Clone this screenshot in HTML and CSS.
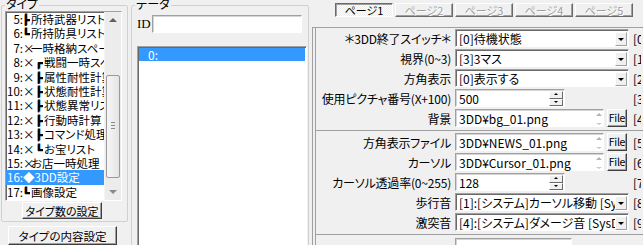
FILE: index.html
```html
<!DOCTYPE html>
<html lang="ja">
<head>
  <meta charset="UTF-8">
  <title>3DD設定</title>
  <link rel="stylesheet" href="styles.css">
</head>
<body>

<div class="window">

  <div class="side">
    <div class="group type-group">
      <div class="legend">タイプ</div>
      <div class="listbox type-list">
        <ul class="items">
          <li><span class="num">5:</span><span class="tree">┣</span>所持武器リスト</li>
          <li><span class="num">6:</span><span class="tree">┗</span>所持防具リスト</li>
          <li><span class="num">7:</span><span class="mark">×</span>一時格納スペース</li>
          <li><span class="num">8:</span><span class="mark">×</span><span class="tree sub">┏</span>戦闘一時スペース</li>
          <li><span class="num">9:</span><span class="mark">×</span><span class="tree sub">┣</span>属性耐性計算</li>
          <li><span class="num">10:</span><span class="mark">×</span><span class="tree sub">┣</span>状態耐性計算</li>
          <li><span class="num">11:</span><span class="mark">×</span><span class="tree sub">┣</span>状態異常リスト</li>
          <li><span class="num">12:</span><span class="mark">×</span><span class="tree sub">┣</span>行動時計算</li>
          <li><span class="num">13:</span><span class="mark">×</span><span class="tree sub">┣</span>コマンド処理</li>
          <li><span class="num">14:</span><span class="mark">×</span><span class="tree sub">┗</span>お宝リスト</li>
          <li><span class="num">15:</span><span class="mark">×</span>お店一時処理</li>
          <li class="selected"><span class="num">16:</span>◆3DD設定</li>
          <li><span class="num">17:</span><span class="tree">┗</span>画像設定</li>
        </ul>
        <div class="vscroll">
          <div class="arrow up"></div>
          <div class="track"><div class="thumb"></div></div>
          <div class="arrow down"></div>
        </div>
      </div>
      <button class="btn type-count">タイプ数の設定</button>
    </div>
    <button class="btn type-edit">タイプの内容設定</button>
  </div>

  <div class="group data-group">
    <div class="legend">データ</div>
    <div class="id-row">
      <span class="id-label">ID</span>
      <div class="edit id-edit"></div>
    </div>
    <ul class="data-list">
      <li class="selected">0:</li>
    </ul>
  </div>

  <div class="editor">
    <div class="tabs">
      <div class="tab active">ページ1</div>
      <div class="tab">ページ2</div>
      <div class="tab">ページ3</div>
      <div class="tab">ページ4</div>
      <div class="tab">ページ5</div>
    </div>

    <div class="pane">
      <div class="section first">
        <div class="row">
          <label>＊3DD終了スイッチ＊</label>
          <div class="combo"><span class="value">[0]待機状態</span><span class="drop"></span></div>
          <span class="idx">[0]</span>
        </div>
        <div class="row">
          <label>視界(0~3)</label>
          <div class="combo"><span class="value">[3]3マス</span><span class="drop"></span></div>
          <span class="idx">[1]</span>
        </div>
        <div class="row">
          <label>方角表示</label>
          <div class="combo"><span class="value">[0]表示する</span><span class="drop"></span></div>
          <span class="idx">[2]</span>
        </div>
        <div class="row">
          <label>使用ピクチャ番号(X+100)</label>
          <div class="edit spin-edit"><span class="value">500</span><span class="spin"><i class="up"></i><i class="down"></i></span></div>
          <span class="idx">[3]</span>
        </div>
        <div class="row">
          <label>背景</label>
          <div class="file-field">
            <div class="edit file-edit"><span class="value">3DD¥bg_01.png</span><span class="mini"></span></div>
            <button class="btn file-btn">File</button>
          </div>
          <span class="idx">[4]</span>
        </div>
      </div>

      <div class="section second">
        <div class="row">
          <label>方角表示ファイル</label>
          <div class="file-field">
            <div class="edit file-edit"><span class="value">3DD¥NEWS_01.png</span><span class="mini"></span></div>
            <button class="btn file-btn">File</button>
          </div>
          <span class="idx">[5]</span>
        </div>
        <div class="row">
          <label>カーソル</label>
          <div class="file-field">
            <div class="edit file-edit"><span class="value">3DD¥Cursor_01.png</span><span class="mini"></span></div>
            <button class="btn file-btn">File</button>
          </div>
          <span class="idx">[6]</span>
        </div>
        <div class="row">
          <label>カーソル透過率(0~255)</label>
          <div class="edit spin-edit"><span class="value">128</span><span class="spin"><i class="up"></i><i class="down"></i></span></div>
          <span class="idx">[7]</span>
        </div>
        <div class="row">
          <label>歩行音</label>
          <div class="combo"><span class="value">[1]:[システム]カーソル移動 [SysDB3:1]</span><span class="drop"></span></div>
          <span class="idx">[8]</span>
        </div>
        <div class="row">
          <label>激突音</label>
          <div class="combo"><span class="value">[4]:[システム]ダメージ音 [SysDB3]</span><span class="drop"></span></div>
          <span class="idx">[9]</span>
        </div>
      </div>

      <div class="section third">
        <div class="row">
          <label></label>
          <div class="edit short-edit"></div>
        </div>
      </div>
    </div>
  </div>

</div>

</body>
</html>
```

FILE: styles.css
```css
* {
  box-sizing: border-box;
}

body {
  margin: 0;
  height: 245px;
  overflow: hidden;
  background: #f0f0f0;
  font-family: "Noto Sans CJK JP", "Noto Sans", sans-serif;
  font-size: 12px;
  font-feature-settings: "palt";
  color: #000;
}

.window {
  display: flex;
  height: 245px;
  overflow: hidden;
}

/* group boxes */

.group {
  position: relative;
  flex: none;
  border: 1px solid #d0d0d0;
  border-radius: 2px;
}

.legend {
  position: absolute;
  top: -9px;
  left: 3px;
  padding: 0 1px;
  line-height: 14px;
  background: #f0f0f0;
}

/* left column */

.side {
  flex: none;
  width: 131px;
  padding-left: 1px;
}

.type-group {
  margin-top: 5px;
  width: 127px;
  height: 217px;
  padding: 5px 0 0 3px;
}

.listbox {
  display: flex;
  width: 117px;
  height: 190px;
  background: #fff;
  border: 1px solid;
  border-color: #a0a0a0 #fff #fff #a0a0a0;
  box-shadow: inset 1px 1px #696969;
}

.items {
  flex: 1;
  min-width: 0;
  margin: 0;
  padding: 0;
  list-style: none;
  overflow: hidden;
  font-size: 11.5px;
}

.items li {
  height: 14.4px;
  line-height: 14.4px;
  white-space: nowrap;
}

.items .selected,
.data-list .selected {
  background: #3399ff;
  color: #fff;
}

.num {
  display: inline-block;
  width: 17px;
  text-align: right;
}

.mark {
  display: inline-block;
  width: 8px;
  text-align: center;
}

/* only the right half of the full-width box glyph is shown */
.tree {
  display: inline-block;
  vertical-align: top;
  width: 6px;
  height: 14.4px;
  margin: 0 1px 0 1px;
  overflow: hidden;
  font-size: 11px;
  font-weight: 700;
  font-feature-settings: normal;
  line-height: 14.4px;
  text-indent: -4px;
  text-shadow: 1px 0 currentColor, 0 1px currentColor;
}

.tree.sub {
  margin-left: 6px;
}

.vscroll {
  flex: none;
  width: 17px;
  display: flex;
  flex-direction: column;
  background: #ececec;
  border-left: 1px solid #f4f4f4;
}

.arrow {
  position: relative;
  height: 17px;
  flex: none;
}

.arrow::after {
  content: "";
  position: absolute;
  left: 4px;
  border-left: 4px solid transparent;
  border-right: 4px solid transparent;
}

.arrow.up::after {
  top: 6px;
  border-bottom: 4px solid #606060;
}

.arrow.down::after {
  top: 7px;
  border-top: 4px solid #8a8a8a;
}

.track {
  flex: 1;
  padding-top: 46px;
}

.thumb {
  position: relative;
  height: 103px;
  margin: 0 1px;
  border: 1px solid #9a9a9a;
  border-radius: 2px;
  background: linear-gradient(to right, #f6f6f6, #e4e4e4);
}

.thumb::after {
  content: "";
  position: absolute;
  left: 4px;
  right: 4px;
  top: 46px;
  height: 7px;
  background: repeating-linear-gradient(#8a8a8a 0 1px, transparent 1px 3px);
}

.btn {
  display: block;
  padding: 0;
  font-family: inherit;
  font-size: 12px;
  font-feature-settings: "palt";
  white-space: nowrap;
  color: #000;
  background: #f0f0f0;
  border: 1px solid;
  border-color: #fff #404040 #404040 #fff;
  box-shadow: inset -1px -1px #a0a0a0;
}

.type-count {
  width: 80px;
  height: 17px;
  margin: 1px 0 0 17px;
  font-size: 11px;
  line-height: 14px;
}

.type-edit {
  width: 109px;
  height: 19px;
  margin: 4px 0 0 7px;
  font-size: 11.5px;
}

/* data column */

.data-group {
  margin-top: 5px;
  width: 178px;
  height: 245px;
  padding: 9px 0 0 5px;
}

.id-row {
  display: flex;
  align-items: center;
  gap: 2px;
}

.id-label {
  width: 13px;
  font-family: "Liberation Serif", serif;
  font-size: 13px;
}

.edit {
  display: flex;
  align-items: center;
  height: 18px;
  padding-left: 3px;
  background: #fff;
  border: 1px solid;
  border-color: #a0a0a0 #fff #fff #a0a0a0;
  box-shadow: inset 1px 1px #d4d4d4;
}

.id-edit {
  width: 150px;
}

.data-list {
  width: 170px;
  height: 200px;
  margin: 13px 0 0;
  padding: 1px 1px 0 1px;
  list-style: none;
  background: #fff;
  border: 1px solid;
  border-color: #a0a0a0 #fff #fff #a0a0a0;
  box-shadow: inset 1px 1px #696969;
}

.data-list li {
  height: 13px;
  line-height: 13px;
  padding-left: 9px;
}

/* editor */

.editor {
  flex: 1;
  min-width: 0;
}

.tabs {
  display: flex;
  gap: 2px;
  height: 27px;
  padding: 3px 0 0 26px;
}

.tab {
  width: 58px;
  height: 14px;
  font-size: 11px;
  line-height: 12px;
  text-align: center;
  color: #a0a0a0;
  text-shadow: 1px 1px #fff;
  border: 1px solid;
  border-color: #fff #696969 #696969 #fff;
  box-shadow: inset -1px -1px #a0a0a0;
}

.tab.active {
  color: #000;
  text-shadow: none;
  border-color: #696969 #fff #fff #696969;
  box-shadow: inset 1px 1px #a0a0a0;
  background: repeating-conic-gradient(#fff 0 25%, #ececec 0 50%) 0 0 / 2px 2px;
}

.pane {
  margin-left: 3px;
  border-left: 1px solid #a0a0a0;
  border-top: 1px solid #a0a0a0;
}

.section {
  margin-left: 2px;
  border-left: 1px solid #a0a0a0;
  border-bottom: 1px solid #a0a0a0;
}

.section.first {
  padding-bottom: 2px;
}

.section.second {
  padding: 1px 0 2px;
}

.section.third {
  height: 12px;
  padding-top: 2px;
  overflow: hidden;
  border-bottom: none;
}

.row {
  display: grid;
  grid-template-columns: 135px 174px 8px;
  column-gap: 4px;
  align-items: center;
  height: 20px;
  white-space: nowrap;
}

.row label {
  text-align: right;
  letter-spacing: -0.2px;
}

.value {
  flex: 1;
  min-width: 0;
  overflow: hidden;
  white-space: nowrap;
}

.combo {
  display: flex;
  align-items: center;
  height: 18px;
  padding: 0 1px 0 3px;
  background: #fff;
  border: 1px solid;
  border-color: #a0a0a0 #fff #fff #a0a0a0;
  box-shadow: inset 1px 1px #696969;
}

.drop {
  position: relative;
  flex: none;
  width: 12px;
  height: 14px;
  margin-top: 1px;
  background: #f0f0f0;
  border: 1px solid;
  border-color: #fff #a0a0a0 #a0a0a0 #fff;
}

.drop::after {
  content: "";
  position: absolute;
  left: 2px;
  top: 5px;
  border-left: 3px solid transparent;
  border-right: 3px solid transparent;
  border-top: 3px solid #000;
}

.spin-edit {
  width: 110px;
  padding-right: 1px;
}

.spin {
  display: flex;
  flex-direction: column;
  width: 14px;
  height: 15px;
  margin-top: 1px;
}

.spin i {
  position: relative;
  flex: 1;
  background: #f0f0f0;
  border: 1px solid;
  border-color: #fff #696969 #696969 #fff;
}

.spin i::after {
  content: "";
  position: absolute;
  left: 4px;
  top: 1px;
  border-left: 2px solid transparent;
  border-right: 2px solid transparent;
}

.spin .up::after {
  border-bottom: 2px solid #000;
}

.spin .down::after {
  border-top: 2px solid #000;
}

.file-field {
  display: flex;
  gap: 3px;
}

.file-edit {
  width: 149px;
}

.mini {
  position: relative;
  flex: none;
  width: 8px;
  height: 16px;
}

.mini::before,
.mini::after {
  content: "";
  position: absolute;
  left: 1px;
  border-left: 3px solid transparent;
  border-right: 3px solid transparent;
}

.mini::before {
  top: 3px;
  border-bottom: 3px solid #b4b4b4;
}

.mini::after {
  bottom: 1px;
  border-top: 2px solid #c8c8c8;
}

.file-btn {
  width: 20px;
  height: 18px;
  font-size: 10.5px;
  line-height: 14px;
  letter-spacing: -0.3px;
}

.idx {
  overflow: hidden;
}

.short-edit {
  width: 117px;
}
```
